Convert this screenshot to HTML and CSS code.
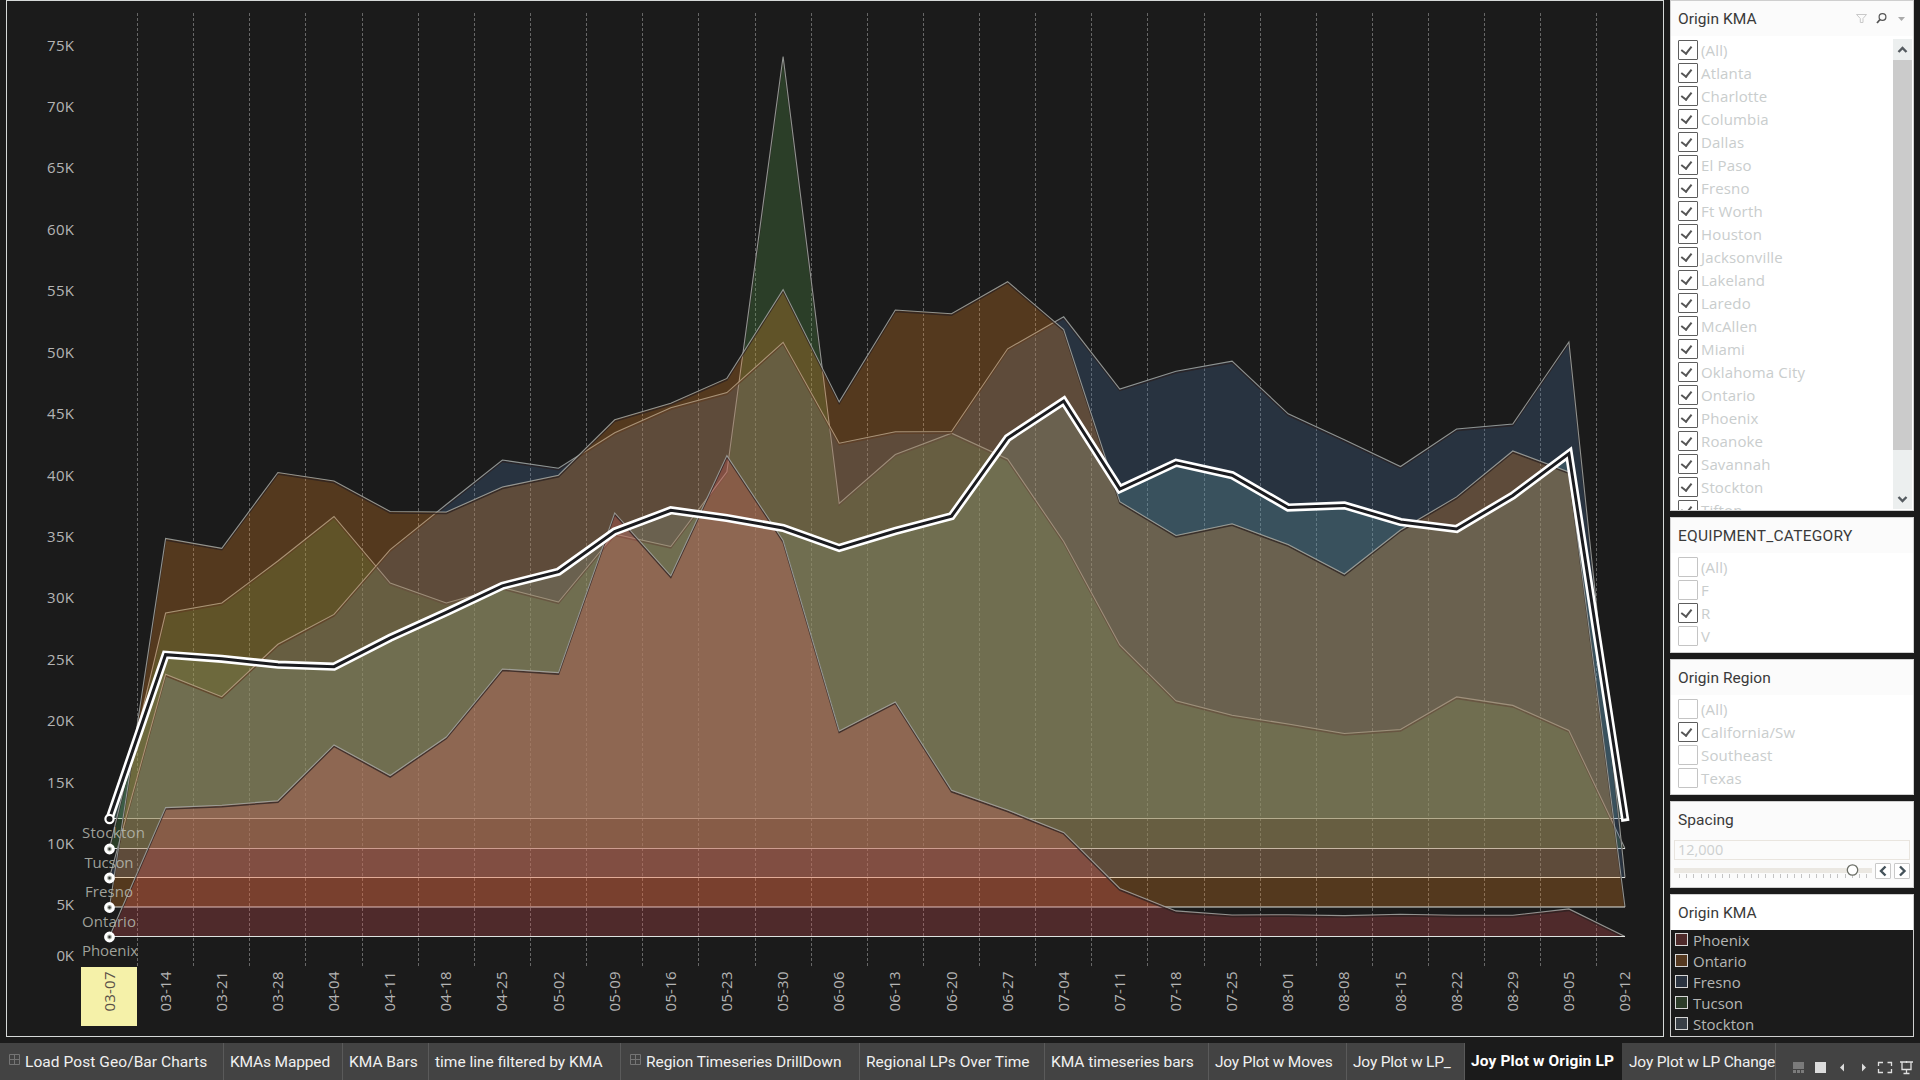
FILE: index.html
```html
<!DOCTYPE html>
<html lang="en-us">
  <head>
    <meta charset="utf-8">
    <title>Joy Plot w Origin LP</title>
    <link rel="stylesheet" href="styles.css">
  </head>
  <body>
    <div class="dashboard">
      <!-- Joy plot -->
      <main class="chart-panel">
        <svg id="chart" class="chart" width="1656" height="1035" viewBox="7 1 1656 1035"></svg>
      </main>

      <!-- Filters and legend -->
      <aside class="sidebar">
        <section class="card kma-filter">
          <header class="card-title">
            <span>Origin KMA</span>
            <svg class="title-icons" width="54" height="14" viewBox="0 0 54 14" fill="none">
              <path d="M1.500 2.500H11.500L8 6.500V10.500H5.300V6.500Z" stroke="#c9c9c9"/>
              <circle cx="27.500" cy="5" r="3.400" stroke="#555" stroke-width="1.200"/>
              <path d="M25 7.500L22 11" stroke="#555" stroke-width="1.800"/>
              <path d="M43 5H50L46.500 9Z" fill="#aaa"/>
            </svg>
          </header>
          <div class="filter-body">
            <ul class="checks">
              <li class="on">(All)</li>
              <li class="on">Atlanta</li>
              <li class="on">Charlotte</li>
              <li class="on">Columbia</li>
              <li class="on">Dallas</li>
              <li class="on">El Paso</li>
              <li class="on">Fresno</li>
              <li class="on">Ft Worth</li>
              <li class="on">Houston</li>
              <li class="on">Jacksonville</li>
              <li class="on">Lakeland</li>
              <li class="on">Laredo</li>
              <li class="on">McAllen</li>
              <li class="on">Miami</li>
              <li class="on">Oklahoma City</li>
              <li class="on">Ontario</li>
              <li class="on">Phoenix</li>
              <li class="on">Roanoke</li>
              <li class="on">Savannah</li>
              <li class="on">Stockton</li>
              <li class="on">Tifton</li>
            </ul>
            <div class="scrollbar">
              <svg width="19" height="21" viewBox="0 0 19 21"><path d="M5.500 13L9.500 9L13.500 13" fill="none" stroke="#555b60" stroke-width="2.400"/></svg>
              <div class="thumb"></div>
              <svg width="19" height="21" viewBox="0 0 19 21"><path d="M5.500 9L9.500 13L13.500 9" fill="none" stroke="#555b60" stroke-width="2.400"/></svg>
            </div>
          </div>
        </section>

        <section class="card small-filter">
          <header class="card-title"><span class="wide">EQUIPMENT_CATEGORY</span></header>
          <ul class="checks">
            <li>(All)</li>
            <li>F</li>
            <li class="on">R</li>
            <li>V</li>
          </ul>
        </section>

        <section class="card small-filter">
          <header class="card-title"><span>Origin Region</span></header>
          <ul class="checks">
            <li>(All)</li>
            <li class="on">California/Sw</li>
            <li>Southeast</li>
            <li>Texas</li>
          </ul>
        </section>

        <section class="card spacing">
          <header class="card-title"><span>Spacing</span></header>
          <div class="spacing-value">12,000</div>
          <div class="slider-row">
            <svg id="slider" width="200" height="18" viewBox="0 0 200 18">
              <rect x="0" y="6" width="198" height="5" fill="#ebe8e2"/>
            </svg>
            <button class="step"><svg width="14" height="14" viewBox="0 0 14 14"><path d="M9.500 2.500L5 7L9.500 11.500"/></svg></button>
            <button class="step"><svg width="14" height="14" viewBox="0 0 14 14"><path d="M5 2.500L9.500 7L5 11.500"/></svg></button>
          </div>
        </section>

        <section class="card legend">
          <header class="card-title"><span>Origin KMA</span></header>
          <ul>
            <li><i class="swatch phoenix"></i>Phoenix</li>
            <li><i class="swatch ontario"></i>Ontario</li>
            <li><i class="swatch fresno"></i>Fresno</li>
            <li><i class="swatch tucson"></i>Tucson</li>
            <li><i class="swatch stockton"></i>Stockton</li>
          </ul>
        </section>
      </aside>
    </div>

    <!-- Sheet tabs -->
    <nav class="tabs">
      <a class="tab t1"><svg class="grid-icon" width="11" height="11" viewBox="0 0 11 11"><path d="M.5 .5H10.500V10.500H.5ZM5.500 .5V10.500M.5 5.500H10.500"/></svg><span>Load Post Geo/Bar Charts</span></a>
      <a class="tab t2"><span>KMAs Mapped</span></a>
      <a class="tab t3"><span>KMA Bars</span></a>
      <a class="tab t4"><span>time line filtered by KMA</span></a>
      <a class="tab t5"><svg class="grid-icon" width="11" height="11" viewBox="0 0 11 11"><path d="M.5 .5H10.500V10.500H.5ZM5.500 .5V10.500M.5 5.500H10.500"/></svg><span>Region Timeseries DrillDown</span></a>
      <a class="tab t6"><span>Regional LPs Over Time</span></a>
      <a class="tab t7"><span>KMA timeseries bars</span></a>
      <a class="tab t8"><span>Joy Plot w Moves</span></a>
      <a class="tab t9"><span>Joy Plot w LP_</span></a>
      <a class="tab t10 active"><span>Joy Plot w Origin LP</span></a>
      <a class="tab t11"><span>Joy Plot w LP Change</span></a>
      <svg class="tab-tools" width="144" height="37" viewBox="1776 1043 144 37">
        <g fill="#7b7b7b">
          <rect x="1793" y="1062" width="11" height="7"/>
          <rect x="1793" y="1070" width="3" height="3"/>
          <rect x="1797" y="1070" width="3" height="3"/>
          <rect x="1801" y="1070" width="3" height="3"/>
        </g>
        <g fill="#dcdcdc">
          <rect x="1815" y="1062" width="11" height="11"/>
          <path d="M1844 1063.500V1071.500L1840 1067.500Z"/>
          <path d="M1862 1063.500V1071.500L1866 1067.500Z"/>
        </g>
        <path d="M1878.500 1066V1062.500H1883M1887.500 1062.500H1891.500V1066M1891.500 1069V1072.500H1887.500M1883 1072.500H1878.500V1069M1900 1062H1913M1902 1062V1069.500H1911V1062M1906.500 1061V1063M1906.500 1070V1073.500M1903.500 1073.500H1909.500" fill="none" stroke="#e0e0e0" stroke-width="1.300"/>
      </svg>
    </nav>

    <script>
      var NS = "http://www.w3.org/2000/svg";
      var chart = document.querySelector("#chart");
      var X0 = 109.5, STEP = 56.13;

      var weeks = ["03-07", "03-14", "03-21", "03-28", "04-04", "04-11", "04-18", "04-25", "05-02", "05-09",
        "05-16", "05-23", "05-30", "06-06", "06-13", "06-20", "06-27", "07-04", "07-11", "07-18",
        "07-25", "08-01", "08-08", "08-15", "08-22", "08-29", "09-05", "09-12"];

      // drawn back to front, each one stands on its own base line
      var series = [
        { name: "Stockton", color: "#76b7b2", base: 818.5, labelX: 82, labelW: 63,
          y: [818.5, 654.7, 658.8, 664.7, 666.7, 637.8, 612.3, 585.8, 571.7, 531.5, 510.3, 518, 528, 548, 531, 516.2, 438, 401, 489, 462.8, 475.2, 507.6, 505.4, 522, 529, 495.5, 453.6, 818.5] },
        { name: "Tucson", color: "#59a14f", base: 848.5, labelX: 84.5, labelW: 49,
          y: [848.5, 613, 603, 561, 516.5, 583, 603, 587.5, 602, 534, 546.5, 471.8, 56.5, 503.5, 454.5, 433.2, 459, 541.5, 645, 700.8, 715.3, 724, 733.5, 729.5, 696.9, 705.4, 730.4, 848.5] },
        { name: "Fresno", color: "#4e79a7", base: 877.5, labelX: 85, labelW: 48,
          y: [877.5, 674.3, 696.7, 644.3, 614.4, 549.6, 504.5, 460, 468.3, 432.8, 407.7, 392.6, 342.3, 443.2, 431.8, 431.5, 348.8, 316.8, 389, 371.2, 361.2, 413.8, 439.7, 466.5, 429, 424, 342, 877.5] },
        { name: "Ontario", color: "#f28e2b", base: 907, labelX: 82, labelW: 54,
          y: [907, 538.5, 548.3, 472.5, 481, 511.5, 512, 487, 475.2, 419.8, 403.2, 378.4, 289.6, 401.9, 310, 313.7, 281.7, 329.5, 501.7, 535.5, 523.8, 544.6, 574, 530, 496.9, 451, 471.9, 907] },
        { name: "Phoenix", color: "#e15759", base: 936.5, labelX: 82, labelW: 56,
          y: [936.5, 807.6, 805.2, 800.7, 744.9, 775.5, 737, 669, 672.6, 513, 575.8, 455.6, 540.5, 731, 701.9, 790.3, 810, 832.4, 888.5, 910.9, 915, 914.7, 915.6, 914.3, 915.2, 915.2, 908.9, 936.5] }
      ];

      function add(tag, attrs, text) {
        var el = document.createElementNS(NS, tag);
        for (var key in attrs) el.setAttribute(key, attrs[key]);
        if (text) el.textContent = text;
        chart.appendChild(el);
        return el;
      }

      function x(i) { return +(X0 + STEP * i).toFixed(1); }

      function points(s, dy) {
        return s.y.map(function(v, i) { return x(i) + "," + (v + dy); }).join(" ");
      }

      // value axis
      for (var k = 0; k <= 15; k++) {
        var y = k === 0 ? 955 : 966.4 - k * 61.42;
        add("text", { x: 74, y: y + 5.5, "class": "axis", "text-anchor": "end", textLength: k < 2 ? 17.5 : 27 }, k * 5 + "K");
      }

      // week separators
      for (var i = 0; i < 27; i++) {
        var gx = Math.floor(137.6 + STEP * i) + 0.5;
        add("line", { x1: gx, x2: gx, y1: 13, y2: 967, "class": "grid" });
      }

      add("rect", { x: 81, y: 967, width: 56, height: 59, "class": "week-selected" });
      weeks.forEach(function(week, i) {
        var cx = x(i), cy = 991.5;
        add("text", { x: cx, y: cy + 5, "class": i ? "axis" : "axis dark", "text-anchor": "middle", textLength: 40,
          transform: "rotate(-90 " + cx + " " + cy + ")" }, week);
      });

      series.forEach(function(s) {
        add("polygon", { points: points(s, 0), fill: s.color, "fill-opacity": 0.265 });
        add("polyline", { points: points(s, 1.5), "class": "shade" });
        add("polyline", { points: points(s, 0), "class": "edge" });
        add("line", { x1: X0, x2: x(27), y1: s.base, y2: s.base, "class": "base" });
      });

      series.forEach(function(s) {
        add("text", { x: s.labelX, y: s.base + 19.7, "class": "mark-label", textLength: s.labelW }, s.name);
      });

      // highlighted series, the halo runs a little past the last week
      add("polyline", { points: points(series[0], 0) + " " + (x(27) + 0.4) + ",821.3", "class": "selected-outer" });
      add("polyline", { points: points(series[0], 0), "class": "selected-inner" });

      series.forEach(function(s, i) {
        add("circle", { cx: X0, cy: s.base + 0.5, r: i ? 3.9 : 4.1, "class": i ? "mark" : "mark mark-selected" });
        if (i) add("circle", { cx: X0, cy: s.base + 0.5, r: 1.2, fill: "#333" });
      });

      // slider ticks and handle
      chart = document.querySelector("#slider");
      for (var t = 0; t < 27; t++) {
        add("rect", { x: 5 + Math.round(t * 7.2), y: 12, width: 1, height: 4, fill: "#c4c4c4" });
      }
      add("circle", { cx: 178.5, cy: 8, r: 5.2, fill: "#fff", stroke: "#6b6e66", "stroke-width": 1.3 });
    </script>
  </body>
</html>
```
FILE: styles.css
```css
* {
  box-sizing: border-box;
}

body {
  margin: 0;
  width: 1920px;
  height: 1080px;
  overflow: hidden;
  background: #1b1b1b;
  font-family: "Open Sans", "Noto Sans", sans-serif;
  font-size: 15px;
  color: #c8cccc;
}

ul {
  list-style: none;
  margin: 0;
  padding: 0;
}

.dashboard {
  display: flex;
  gap: 6px;
  height: 1043px;
  padding-left: 6px;
}

/* Chart */
.chart-panel {
  width: 1658px;
  height: 1037px;
  border: 1px solid #d6d9d8;
}

.chart {
  display: block;
}

.axis {
  fill: #b4b4b4;
  font-family: "Open Sans", sans-serif;
  font-size: 15px;
}

.axis.dark {
  fill: #5a5048;
}

.grid {
  stroke: #666;
  stroke-width: 1;
  stroke-dasharray: 3 2;
}

.week-selected {
  fill: #f5f1a9;
}

.shade {
  fill: none;
  stroke: #2a2020;
  stroke-opacity: 0.75;
  stroke-width: 1.5;
}

.edge {
  fill: none;
  stroke: #a2a7a3;
  stroke-opacity: 0.85;
  stroke-width: 1.1;
}

.base {
  stroke: #dfe3e0;
  stroke-width: 1.2;
}

.mark-label {
  fill: #b9bcb3;
  fill-opacity: 0.85;
  font-size: 15px;
}

.selected-outer {
  fill: none;
  stroke: #fff;
  stroke-width: 8.2;
  stroke-linejoin: miter;
}

.selected-inner {
  fill: none;
  stroke: #1b1c20;
  stroke-width: 3;
}

.mark {
  fill: #aab0a5;
  stroke: #fff;
  stroke-width: 3;
}

.mark-selected {
  fill: #1b1b1b;
  stroke-width: 2.2;
}

/* Sidebar */
.sidebar {
  display: flex;
  flex-direction: column;
  gap: 6px;
  width: 244px;
}

.card {
  background: #fff;
  border: 1px solid #cfcfcf;
}

.card-title {
  display: flex;
  align-items: center;
  justify-content: space-between;
  height: 35px;
  padding: 0 4px 0 7px;
  background: #fbfbfb;
  color: #3a3a3a;
  font-family: Roboto, sans-serif;
  font-size: 15.5px;
  letter-spacing: 0.05px;
}

.wide {
  letter-spacing: 0.25px;
}

.title-icons {
  margin-top: 1px;
}

.kma-filter {
  height: 511px;
}

.filter-body {
  display: flex;
  justify-content: space-between;
  height: 474px;
  overflow: hidden;
}

.small-filter {
  height: 136px;
}

.checks {
  padding: 5px 0 0 7px;
}

.checks li {
  position: relative;
  display: flex;
  align-items: center;
  gap: 3px;
  height: 18px;
  margin-bottom: 5px;
  color: #c9cdcd;
  letter-spacing: 0.15px;
  line-height: 17px;
  white-space: nowrap;
}

.checks li::before {
  content: "";
  flex: none;
  width: 18px;
  height: 18px;
  border: 1px solid #c4c4c4;
  border-radius: 1px;
}

.checks li.on::before {
  border-color: #5d5d5d;
}

/* tick inside a checked box */
.checks li.on::after {
  content: "";
  position: absolute;
  left: 5px;
  top: 3px;
  width: 5px;
  height: 8px;
  border: solid #555;
  border-width: 0 2px 2px 0;
  transform: rotate(38deg);
}

.scrollbar {
  display: flex;
  flex-direction: column;
  width: 19px;
  height: 470px;
  margin: 3px 1px 0 0;
  background: #ecefef;
}

.scrollbar svg {
  flex: none;
}

.thumb {
  flex: none;
  height: 390px;
  margin-bottom: 38px;
  background: #cbcbcb;
}

.spacing {
  height: 87px;
  background: #fbfbfb;
}

.spacing-value {
  height: 20px;
  margin: 3px 3px 0;
  padding-left: 3px;
  border: 1px solid #e9e5df;
  color: #cdd0d0;
  font-size: 14.5px;
  line-height: 18px;
}

.slider-row {
  display: flex;
  padding: 2px 3px;
}

.step {
  width: 16px;
  height: 16px;
  margin: 1px 3px 0 1px;
  padding: 0;
  border: 1px solid #c9c9c9;
  border-radius: 1px;
  background: #fff;
  flex: none;
}

.step:last-child {
  margin: 1px 0 0 0;
}

.step svg {
  display: block;
}

.step path {
  fill: none;
  stroke: #44525a;
  stroke-width: 2.4;
}

.legend {
  height: 143px;
  background: #1b1b1b;
}

.legend .card-title {
  background: #fff;
}

.legend ul {
  margin-top: -1px;
}

.legend li {
  display: flex;
  align-items: center;
  gap: 5px;
  height: 21px;
  padding-left: 4px;
  color: #b4b6b4;
}

.swatch {
  width: 13px;
  height: 13px;
  border: 1px solid #d6d6d6;
}

.phoenix { background: #4e2a2a; }
.ontario { background: #553920; }
.fresno { background: #2a3340; }
.tucson { background: #2c3c29; }
.stockton { background: #393f46; }

/* Sheet tabs */
.tabs {
  display: flex;
  height: 37px;
  background: #434343;
}

.tab {
  display: flex;
  align-items: center;
  flex: none;
  padding-left: 6px;
  border-right: 1px solid #5a5a5a;
  color: #f0f0f0;
  font-family: Roboto, sans-serif;
  font-size: 15.5px;
  white-space: nowrap;
}

.grid-icon {
  flex: none;
  margin: -4px 5px 0 3px;
  fill: none;
  stroke: #747474;
}

.tab.active {
  background: #1b1b1b;
  border-color: #1b1b1b;
  color: #fff;
  font-weight: 700;
  letter-spacing: 0.13px;
  padding-bottom: 2px;
}

.t1 { width: 224px; letter-spacing: 0.07px; }
.t2 { width: 119px; letter-spacing: -0.15px; }
.t3 { width: 86px; }
.t4 { width: 192px; }
.t5 { width: 239px; letter-spacing: -0.07px; }
.t6 { width: 185px; }
.t7 { width: 164px; letter-spacing: -0.05px; }
.t8 { width: 138px; letter-spacing: -0.22px; }
.t9 { width: 118px; letter-spacing: -0.2px; }
.t10 { width: 157px; }
.t11 { width: 154px; letter-spacing: -0.18px; padding-left: 7px; }
```
